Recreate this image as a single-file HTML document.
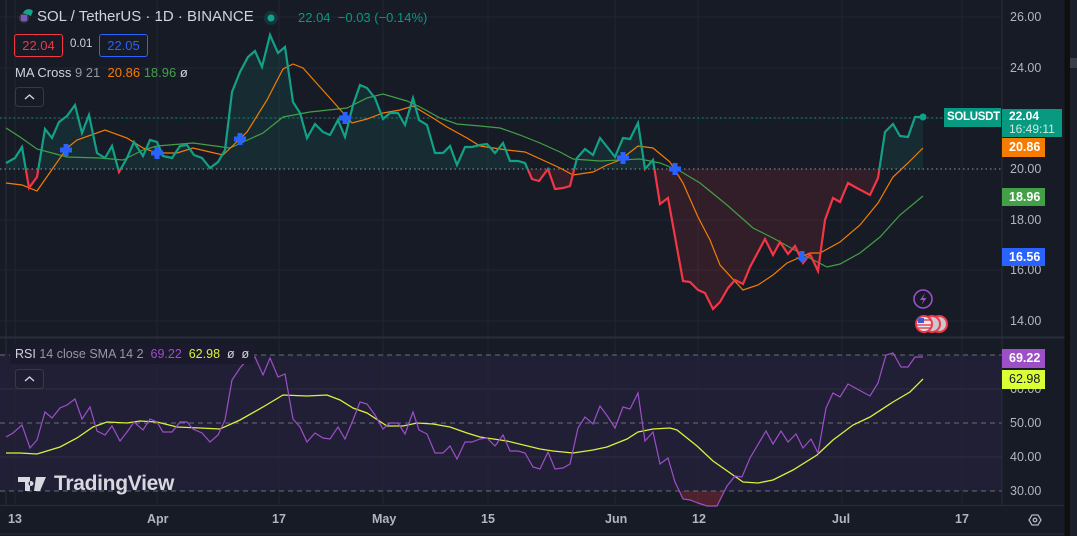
<!DOCTYPE html>
<html><head><meta charset="utf-8"><style>
html,body{margin:0;padding:0;background:#0f0f0f;}
#w{position:relative;width:1077px;height:536px;overflow:hidden;background:#0f0f0f;font-family:"Liberation Sans",sans-serif;}
svg{position:absolute;left:0;top:0;}
.t{position:absolute;white-space:nowrap;}
.tag{position:absolute;color:#fff;font-size:12.5px;font-weight:bold;padding-left:7px;box-sizing:border-box;line-height:19px;white-space:nowrap;overflow:hidden;}
</style></head><body><div id="w">
<svg width="1077" height="536" viewBox="0 0 1077 536">
<defs>
<clipPath id="up"><rect x="0" y="0" width="1002" height="169"/></clipPath>
<clipPath id="dn"><rect x="0" y="169" width="1002" height="170"/></clipPath>
<clipPath id="rdn"><rect x="0" y="491" width="1002" height="20"/></clipPath>
</defs>
<rect x="0" y="0" width="1066" height="536" fill="#171b26"/>
<rect x="1070" y="0" width="7" height="536" fill="#1c202b"/>
<rect x="1070" y="58" width="7" height="10" fill="#3a3e49"/>
<line x1="6" y1="0" x2="6" y2="505" stroke="#2a2e39"/>
<rect x="0" y="355" width="1002" height="136" fill="#211f35"/>
<g stroke="#222631" stroke-width="1">
<line x1="0" y1="17" x2="1002" y2="17"/><line x1="0" y1="68" x2="1002" y2="68"/><line x1="0" y1="118" x2="1002" y2="118"/><line x1="0" y1="220" x2="1002" y2="220"/><line x1="0" y1="270" x2="1002" y2="270"/><line x1="0" y1="321" x2="1002" y2="321"/>
<line x1="0" y1="389" x2="1002" y2="389" stroke="#2e2d45"/><line x1="0" y1="457" x2="1002" y2="457" stroke="#2e2d45"/>
<line x1="15" y1="0" x2="15" y2="505"/><line x1="157" y1="0" x2="157" y2="505"/><line x1="279" y1="0" x2="279" y2="505"/><line x1="383" y1="0" x2="383" y2="505"/><line x1="488" y1="0" x2="488" y2="505"/><line x1="615" y1="0" x2="615" y2="505"/><line x1="698" y1="0" x2="698" y2="505"/><line x1="842" y1="0" x2="842" y2="505"/><line x1="962" y1="0" x2="962" y2="505"/>
</g>
<g stroke="#6a6d78" stroke-dasharray="5,4"><line x1="0" y1="355" x2="1002" y2="355"/><line x1="0" y1="423" x2="1002" y2="423"/><line x1="0" y1="491" x2="1002" y2="491"/></g>
<line x1="0" y1="337.5" x2="1066" y2="337.5" stroke="#2a2e39" stroke-width="2"/>
<line x1="0" y1="505.5" x2="1066" y2="505.5" stroke="#2a2e39"/>
<line x1="1002" y1="0" x2="1002" y2="505" stroke="#2a2e39"/>
<line x1="0" y1="534" x2="1066" y2="534" stroke="#2a2e39"/>
<line x1="1066" y1="0" x2="1066" y2="536" stroke="#0f0f0f" stroke-width="3"/>
<line x1="0" y1="169" x2="1002" y2="169" stroke="#9598a1" stroke-dasharray="1.5,3"/>
<line x1="0" y1="118" x2="1002" y2="118" stroke="#089981" stroke-dasharray="1.5,3"/>
<polygon clip-path="url(#up)" fill="#0e9c82" fill-opacity="0.13" points="6,169 6,163 15,158 22,147 29,188 37,177 45,129 52,138 59,122 67,116 75,105 82,133 89,115 97,153 105,158 112,146 119,172 127,158 134,142 143,156 150,140 157,142 163,156 172,158 180,146 187,145 194,155 202,158 210,168 218,162 225,150 232,92 240,72 248,57 255,51 262,67 270,35 278,53 285,47 293,102 300,113 307,138 315,124 323,132 330,135 338,120 345,137 353,105 360,85 367,88 375,98 383,119 390,113 398,113 405,125 413,98 419,120 427,125 435,153 443,153 450,146 457,165 465,147 472,147 480,145 487,144 495,153 503,143 510,161 518,161 525,163 532,179 539,181 548,169 555,189 563,188 570,186 577,158 585,149 593,155 600,138 608,148 615,157 623,138 630,139 638,123 645,169 653,160 660,204 668,198 683,281 690,282 698,290 705,293 713,309 720,302 728,288 735,280 743,284 750,267 765,239 773,255 780,242 788,254 795,246 803,263 810,254 818,271 825,220 833,198 840,202 848,183 855,187 870,195 878,178 885,132 893,124 900,136 908,137 915,117 923,117 923,169"/>
<polygon clip-path="url(#dn)" fill="#f23645" fill-opacity="0.12" points="6,169 6,163 15,158 22,147 29,188 37,177 45,129 52,138 59,122 67,116 75,105 82,133 89,115 97,153 105,158 112,146 119,172 127,158 134,142 143,156 150,140 157,142 163,156 172,158 180,146 187,145 194,155 202,158 210,168 218,162 225,150 232,92 240,72 248,57 255,51 262,67 270,35 278,53 285,47 293,102 300,113 307,138 315,124 323,132 330,135 338,120 345,137 353,105 360,85 367,88 375,98 383,119 390,113 398,113 405,125 413,98 419,120 427,125 435,153 443,153 450,146 457,165 465,147 472,147 480,145 487,144 495,153 503,143 510,161 518,161 525,163 532,179 539,181 548,169 555,189 563,188 570,186 577,158 585,149 593,155 600,138 608,148 615,157 623,138 630,139 638,123 645,169 653,160 660,204 668,198 683,281 690,282 698,290 705,293 713,309 720,302 728,288 735,280 743,284 750,267 765,239 773,255 780,242 788,254 795,246 803,263 810,254 818,271 825,220 833,198 840,202 848,183 855,187 870,195 878,178 885,132 893,124 900,136 908,137 915,117 923,117 923,169"/>
<polyline fill="none" stroke="#43a047" stroke-width="1.2" points="6,128 20,137 37,149 67,157 100,158 123,160 143,150 157,146 193,143 230,148 263,133 283,117 310,112 347,108 367,98 383,94 407,101 420,107 440,118 457,124 480,126 500,128 520,135 540,143 560,152 573,159 600,161 620,160 640,159 660,163 680,171 700,183 727,205 753,228 773,238 800,253 827,267 840,264 860,253 880,237 900,215 923,196"/>
<polyline fill="none" stroke="#f57c00" stroke-width="1.2" points="6,183 22,185 37,191 67,148 77,140 105,130 127,138 143,148 157,153 177,153 193,148 210,152 223,155 247,132 267,100 283,69 293,64 303,68 320,87 337,106 352,123 367,119 383,113 400,110 413,106 433,118 447,127 467,138 480,146 507,150 525,152 547,162 560,168 573,175 593,172 607,165 620,160 638,146 653,148 670,162 683,183 698,217 710,240 720,265 743,290 758,285 773,275 787,263 810,253 820,253 840,242 860,225 878,203 893,177 908,163 923,148"/>
<g fill="none" stroke-width="2.2">
<polyline clip-path="url(#up)" stroke="#12a187" points="6,163 15,158 22,147 29,188 37,177 45,129 52,138 59,122 67,116 75,105 82,133 89,115 97,153 105,158 112,146 119,172 127,158 134,142 143,156 150,140 157,142 163,156 172,158 180,146 187,145 194,155 202,158 210,168 218,162 225,150 232,92 240,72 248,57 255,51 262,67 270,35 278,53 285,47 293,102 300,113 307,138 315,124 323,132 330,135 338,120 345,137 353,105 360,85 367,88 375,98 383,119 390,113 398,113 405,125 413,98 419,120 427,125 435,153 443,153 450,146 457,165 465,147 472,147 480,145 487,144 495,153 503,143 510,161 518,161 525,163 532,179 539,181 548,169 555,189 563,188 570,186 577,158 585,149 593,155 600,138 608,148 615,157 623,138 630,139 638,123 645,169 653,160 660,204 668,198 683,281 690,282 698,290 705,293 713,309 720,302 728,288 735,280 743,284 750,267 765,239 773,255 780,242 788,254 795,246 803,263 810,254 818,271 825,220 833,198 840,202 848,183 855,187 870,195 878,178 885,132 893,124 900,136 908,137 915,117 923,117"/>
<polyline clip-path="url(#dn)" stroke="#f23645" points="6,163 15,158 22,147 29,188 37,177 45,129 52,138 59,122 67,116 75,105 82,133 89,115 97,153 105,158 112,146 119,172 127,158 134,142 143,156 150,140 157,142 163,156 172,158 180,146 187,145 194,155 202,158 210,168 218,162 225,150 232,92 240,72 248,57 255,51 262,67 270,35 278,53 285,47 293,102 300,113 307,138 315,124 323,132 330,135 338,120 345,137 353,105 360,85 367,88 375,98 383,119 390,113 398,113 405,125 413,98 419,120 427,125 435,153 443,153 450,146 457,165 465,147 472,147 480,145 487,144 495,153 503,143 510,161 518,161 525,163 532,179 539,181 548,169 555,189 563,188 570,186 577,158 585,149 593,155 600,138 608,148 615,157 623,138 630,139 638,123 645,169 653,160 660,204 668,198 683,281 690,282 698,290 705,293 713,309 720,302 728,288 735,280 743,284 750,267 765,239 773,255 780,242 788,254 795,246 803,263 810,254 818,271 825,220 833,198 840,202 848,183 855,187 870,195 878,178 885,132 893,124 900,136 908,137 915,117 923,117"/>
</g>
<circle cx="923" cy="117" r="3.5" fill="#12a187"/>
<g fill="#2962ff">
<path d="M63.5,144h5v3.5h3.5v5h-3.5v3.5h-5v-3.5h-3.5v-5h3.5z"/>
<path d="M154.5,147h5v3.5h3.5v5h-3.5v3.5h-5v-3.5h-3.5v-5h3.5z"/>
<path d="M237.5,133h5v3.5h3.5v5h-3.5v3.5h-5v-3.5h-3.5v-5h3.5z"/>
<path d="M342.5,112h5v3.5h3.5v5h-3.5v3.5h-5v-3.5h-3.5v-5h3.5z"/>
<path d="M620.5,152h5v3.5h3.5v5h-3.5v3.5h-5v-3.5h-3.5v-5h3.5z"/>
<path d="M672.5,163h5v3.5h3.5v5h-3.5v3.5h-5v-3.5h-3.5v-5h3.5z"/>
<path d="M799.5,251h5v6h3.5l-6,6l-6,-6h3.5z"/>
</g>
<polygon clip-path="url(#rdn)" fill="#f23645" fill-opacity="0.25" points="675,482 683,499 690,500 698,503 707,506 717,506 727,486 735,476"/>
<polyline fill="none" stroke="#dbf03c" stroke-width="1.3" points="6,453 20,453 37,454 60,447 77,438 93,427 107,422 127,423 140,421 157,422 177,427 200,428 220,429 240,420 263,407 283,395 307,396 327,395 340,400 353,408 367,413 387,426 403,426 417,423 433,424 450,427 467,433 480,437 507,441 540,449 553,451 573,453 593,450 607,447 627,439 638,432 653,429 670,428 677,430 697,446 713,461 743,482 758,483 773,480 793,470 817,455 833,440 853,425 870,417 893,402 910,392 923,379"/>
<polyline fill="none" stroke="#9c4fc7" stroke-width="1.2" points="6,437 13,433 22,425 30,448 37,440 45,412 52,418 60,408 67,405 75,399 82,419 90,407 97,431 105,435 112,426 120,441 127,432 134,422 143,430 150,419 157,422 163,432 172,432 180,422 187,422 193,429 202,433 210,442 218,435 225,420 232,380 240,368 248,359 255,357 263,375 270,358 278,377 285,374 293,419 300,427 307,442 315,433 323,438 330,439 338,427 345,439 353,420 360,402 367,404 375,415 383,429 390,423 398,423 405,434 413,412 419,430 427,434 435,453 443,453 450,446 457,459 465,442 472,442 480,439 487,438 495,446 503,435 510,451 518,451 525,453 533,467 540,469 548,452 555,469 563,468 570,464 578,428 585,417 593,424 600,406 608,417 615,428 623,407 630,409 638,393 645,441 653,432 660,464 668,458 675,482 683,499 690,500 698,503 707,506 717,506 727,486 735,476 742,477 750,458 766,431 773,444 781,431 788,442 796,434 803,448 811,439 818,453 826,408 833,393 840,397 848,384 870,396 878,383 886,355 893,353 901,367 908,367 915,357 923,357"/>
<circle cx="923" cy="299" r="9" fill="none" stroke="#9c4fc7" stroke-width="1.6"/>
<path d="M925,293l-5,7h3.5l-2,5l5,-7h-3.5z" fill="#9c4fc7"/>
<g stroke="#f23645" stroke-width="2">
<circle cx="939" cy="324" r="8" fill="#c8c8d0"/><circle cx="932" cy="324" r="8" fill="#c8c8d0"/><circle cx="924" cy="324" r="8" fill="#e8e8ee"/>
</g>
<rect x="918" y="318" width="6" height="5" fill="#3b5bd0"/>
<g stroke="#e03040" stroke-width="1.3"><line x1="924" y1="320" x2="931" y2="320"/><line x1="917" y1="325" x2="931" y2="325"/><line x1="918" y1="328" x2="930" y2="328"/></g>
<circle cx="24" cy="18" r="5" fill="#3d3d4a"/><rect x="21" y="15" width="6" height="6" fill="#8a5fd0" opacity=".8"/>
<path d="M23,13a6,6 0 0 1 10,-2l-2,5z" fill="#14a38b"/>
<circle cx="271" cy="18" r="7" fill="#15333a"/><circle cx="271" cy="18" r="3.5" fill="#14a38b"/>
<rect x="15.5" y="87.5" width="28" height="19" rx="3" fill="#171b26" stroke="#363a45"/>
<path d="M25,99l4.5,-4l4.5,4" fill="none" stroke="#d1d4dc" stroke-width="1.4"/>
<rect x="15.5" y="369.5" width="28" height="19" rx="3" fill="#1f1d32" stroke="#363a45"/>
<path d="M25,381l4.5,-4l4.5,4" fill="none" stroke="#d1d4dc" stroke-width="1.4"/>
<path d="M1029,520 l3,-5 h6 l3,5 l-3,5 h-6z" fill="none" stroke="#b2b5be" stroke-width="1.3"/>
<circle cx="1035" cy="520" r="1.8" fill="none" stroke="#b2b5be" stroke-width="1.3"/>
<path d="M18,477h12v14h-5v-9h-7z M31,481a2.5,2.5 0 1 0 0.01,0 M36,477h10l-6,14h-6z" fill="#d8d9e0"/>
</svg>
<div class="t" style="left:37px;top:8px;font-size:15px;color:#d1d4dc;">SOL / TetherUS · 1D · BINANCE</div>
<div class="t" style="left:298px;top:10px;font-size:13px;color:#089981;">22.04&nbsp; −0.03 (−0.14%)</div>
<div class="t" style="left:14px;top:34px;width:47px;height:21px;border:1px solid #f23645;border-radius:3px;color:#f23645;font-size:13px;line-height:21px;text-align:center;">22.04</div>
<div class="t" style="left:70px;top:38px;font-size:11.5px;color:#d1d4dc;">0.01</div>
<div class="t" style="left:99px;top:34px;width:47px;height:21px;border:1px solid #2962ff;border-radius:3px;color:#2962ff;font-size:13px;line-height:21px;text-align:center;">22.05</div>
<div class="t" style="left:15px;top:65px;font-size:13px;color:#d1d4dc;">MA Cross <span style="color:#9598a1">9 21</span>&nbsp; <span style="color:#f57c00">20.86</span> <span style="color:#43a047">18.96</span> <span style="color:#d1d4dc">ø</span></div>
<div class="t" style="left:10px;top:344px;height:20px;padding:0 5px;background:#1b1a2c;font-size:12.5px;color:#d1d4dc;line-height:20px;">RSI <span style="color:#9598a1">14 close SMA 14 2</span>&nbsp; <span style="color:#9c4fc7">69.22</span>&nbsp; <span style="color:#dbf03c">62.98</span>&nbsp; ø&nbsp; ø</div>
<div class="t" style="left:54px;top:472px;font-size:21px;color:#d8d9e0;font-weight:bold;letter-spacing:-0.3px;">TradingView</div>
<div style="position:absolute;left:1010px;top:0;font-size:12.5px;color:#b2b5be;">
<div class="t" style="top:10px;">26.00</div><div class="t" style="top:61px;">24.00</div><div class="t" style="top:162px;">20.00</div><div class="t" style="top:213px;">18.00</div><div class="t" style="top:263px;">16.00</div><div class="t" style="top:314px;">14.00</div>
<div class="t" style="top:382px;">60.00</div><div class="t" style="top:416px;">50.00</div><div class="t" style="top:450px;">40.00</div><div class="t" style="top:484px;">30.00</div>
</div>
<div class="tag" style="left:944px;top:108px;width:57px;height:19px;background:#089981;padding-left:3px;font-size:11.5px;letter-spacing:-0.3px;">SOLUSDT</div>
<div class="tag" style="left:1002px;top:109px;width:60px;height:28px;background:#089981;line-height:13px;padding-top:1px;font-size:12px;">22.04<br><span style="font-weight:normal;color:#cfe9e3">16:49:11</span></div>
<div class="tag" style="left:1002px;top:138px;width:43px;height:19px;background:#f57c00;">20.86</div>
<div class="tag" style="left:1002px;top:188px;width:43px;height:18px;background:#43a047;">18.96</div>
<div class="tag" style="left:1002px;top:248px;width:43px;height:18px;background:#2962ff;">16.56</div>
<div class="tag" style="left:1002px;top:349px;width:43px;height:19px;background:#9c4fc7;">69.22</div>
<div class="tag" style="left:1002px;top:370px;width:43px;height:19px;background:#dbff36;color:#131722;font-weight:normal;">62.98</div>
<div style="position:absolute;left:0;top:512px;font-size:12.5px;color:#b2b5be;font-weight:bold;">
<div class="t" style="left:8px;">13</div><div class="t" style="left:147px;">Apr</div><div class="t" style="left:272px;">17</div><div class="t" style="left:372px;">May</div><div class="t" style="left:481px;">15</div><div class="t" style="left:605px;">Jun</div><div class="t" style="left:692px;">12</div><div class="t" style="left:832px;">Jul</div><div class="t" style="left:955px;">17</div>
</div>
</div></body></html>
